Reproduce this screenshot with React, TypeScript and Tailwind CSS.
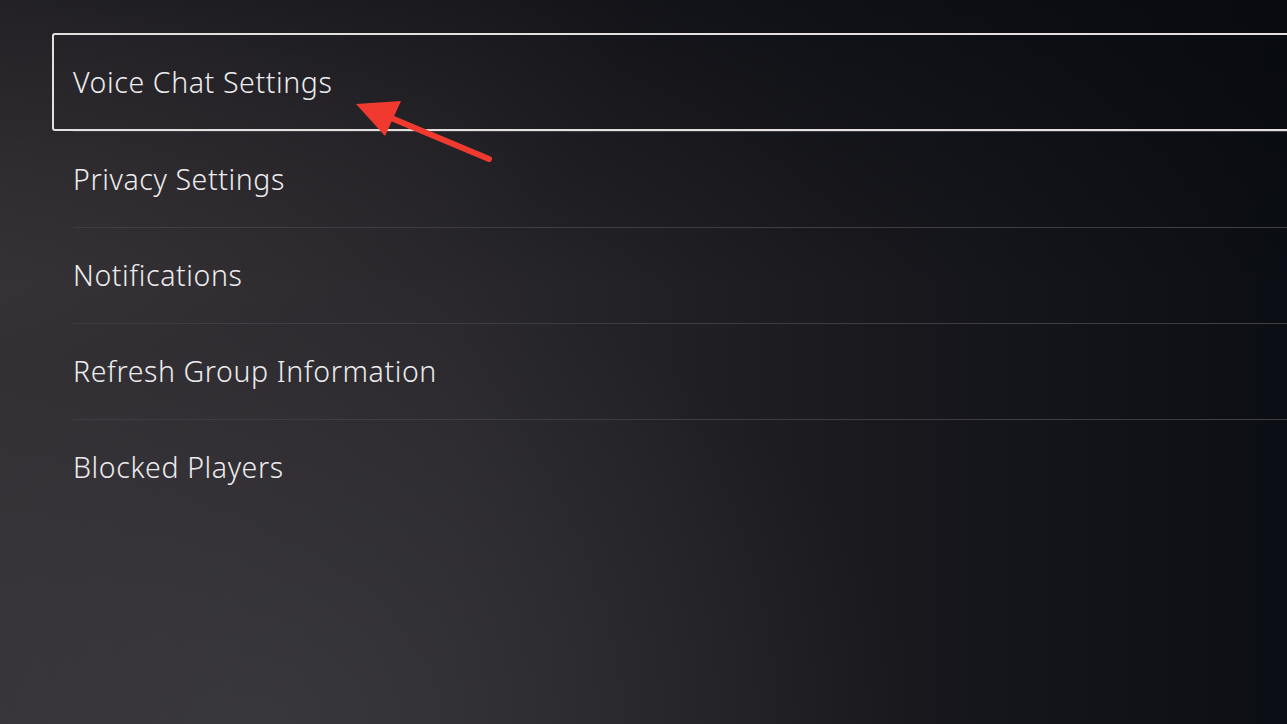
import React from 'react';

const items = ['Voice Chat Settings', 'Privacy Settings', 'Notifications', 'Refresh Group Information', 'Blocked Players'];

const App: React.FC = () => {
  return (
    <div className="relative w-[1287px] h-[724px] overflow-hidden bg-[#1c1c21] font-['Noto_Sans',sans-serif]">
      {/* background lighting */}
      <div className="absolute inset-0 bg-[linear-gradient(90deg,#322f33_0%,#2a282c_35%,#1a1a1f_65%,#0c0e15_100%)]" />
      <div className="absolute inset-0 bg-[radial-gradient(ellipse_at_0%_0%,rgba(90,80,80,0.45)_0%,rgba(0,0,0,0)_35%)]" />
      <div className="absolute inset-0 bg-[radial-gradient(ellipse_at_20%_100%,rgba(70,70,75,0.45)_0%,rgba(0,0,0,0)_45%)]" />
      <div className="absolute inset-0 bg-[linear-gradient(180deg,rgba(6,8,14,0.55)_0%,rgba(0,0,0,0)_40%)]" />

      <div className="relative pt-[33px] pl-[52px]">
        {items.map((label, i) => (
          <div key={label} className={i === 0 ? 'h-[98px] -mr-4 flex items-center rounded-[3px] border-2 border-[#e4e0e0] pl-[19px]' : 'h-[96px] flex items-center ml-[21px] border-t border-[#3e3d43]'}>
            <span className="text-[28.5px] font-light text-[#ececee] tracking-[0.6px] leading-none">{label}</span>
          </div>
        ))}
      </div>

      {/* annotation arrow */}
      <svg className="absolute left-0 top-0" width="1287" height="724">
        <line x1="489" y1="159" x2="384" y2="115" stroke="#f13a2f" strokeWidth="6" strokeLinecap="round" />
        <polygon points="356,104 401,101 385,136" fill="#f13a2f" />
      </svg>
    </div>
  );
};

export default App;
